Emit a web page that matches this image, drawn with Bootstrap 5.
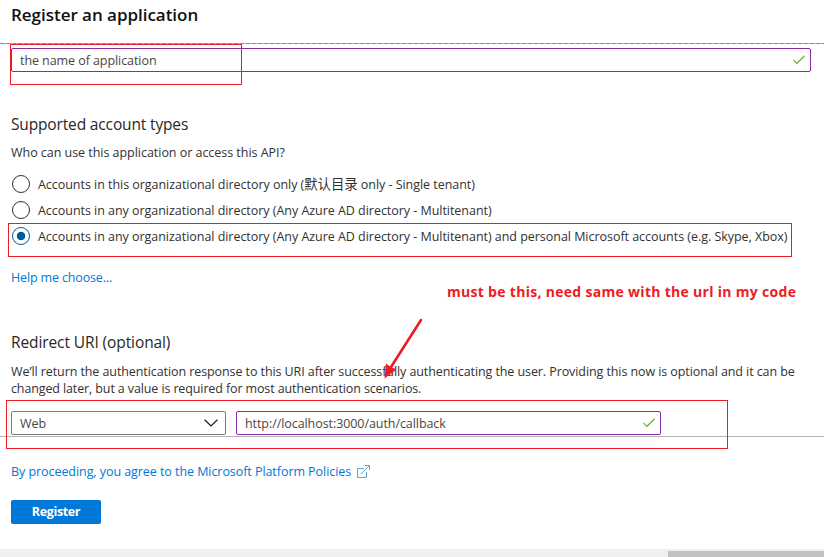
<!DOCTYPE html>
<html lang="en">
<head>
<meta charset="utf-8">
<meta name="viewport" content="width=device-width, initial-scale=1">
<title>Register an application</title>
<link href="https://cdn.jsdelivr.net/npm/bootstrap@5.3.0/dist/css/bootstrap.min.css" rel="stylesheet">
<style>
body{font-family:"Open Sans","Noto Sans CJK SC",sans-serif;font-size:12.5px;line-height:17px;letter-spacing:-.035px;color:#323130;background:#fff;height:557px;overflow:hidden}
.gutter-x{padding-left:11px;padding-right:13px}
.page-title{font-size:17px;line-height:30px;height:43px;font-weight:600;letter-spacing:-.03px;color:#111}
.dash-rule{height:1px;background:repeating-linear-gradient(90deg,#1fb5dc 0 4px,#b9b3b3 4px 6px)}
.section-title{font-size:15.5px;line-height:22px;letter-spacing:-.15px;color:#292827;font-weight:400;margin:0}
.az-field{height:24px;border-radius:2px;padding:0 5px 0 8px;background:#fff;border:1px solid #8a2da5;line-height:22px}
.az-field span{padding-top:1px;letter-spacing:-.07px;color:#484644}
.az-select{border-color:#7d7b79;width:215px;padding-right:7px}
.uri-field{width:425px}
.name-field{width:800px;margin-top:4px}
.types-block{margin-top:41px}
.types-question{margin-top:9px}
.radio-list{margin-top:10px;padding-left:1px}
.az-radio{height:26px;gap:8px}
.az-radio .form-check-input{width:18px;height:18px;margin:0;border:1px solid #323130;background-color:#fff;box-shadow:none}
.az-radio .form-check-input:checked{border-color:#005a9e;background-image:radial-gradient(circle,#005a9e 0 3.8px,transparent 4.6px);background-size:100% 100%}
.tenant{letter-spacing:-.04px}
.tenant-name{font-size:13.4px}
.az-link{color:#0078d4;text-decoration:none}
.help-link{margin-top:20px;letter-spacing:-.15px}
.redirect-block{margin-top:45px}
.redirect-title{letter-spacing:-.1px}
.redirect-text{margin-top:10px;letter-spacing:-.085px;line-height:17px;white-space:nowrap}
.redirect-text .line-two{letter-spacing:-.12px}
.uri-row{margin-top:14px;gap:10px}
.footer-rule{height:1px;margin-top:1px;background:#b3b3b3}
.policy{margin-top:26px;letter-spacing:-.06px;gap:6px}
.az-register{width:90px;height:24px;margin-top:20px;padding:0 0 1px;border-radius:2px;background:#0078d7;border:0;font-size:12.5px;line-height:22px;letter-spacing:-.35px;font-weight:700;color:#fff}
.az-register:hover{background:#0078d7;color:#fff}
.scroll-track{height:8px;background:#f0f0f0}
.scroll-thumb{width:156px;height:6px;background:#c1c1c1}
.red-box{position:absolute;border:1px solid #ed1c24}
.rb-name{left:10px;top:44px;width:232px;height:41px}
.rb-radio{left:8px;top:223px;width:784px;height:34px}
.rb-uri{left:6px;top:400px;width:722px;height:49px}
.red-note{position:absolute;left:447px;top:282px;font-size:14px;line-height:20px;letter-spacing:.3px;font-weight:700;color:#ed1c24;white-space:nowrap}
.red-arrow{position:absolute;left:376px;top:312px}
</style>
</head>
<body class="position-relative d-flex flex-column">
<h1 class="page-title gutter-x mb-0 flex-shrink-0">Register an application</h1>
<div class="dash-rule flex-shrink-0"></div>

<main class="gutter-x">
  <div class="az-field name-field d-flex align-items-center justify-content-between">
    <span>the name of application</span>
    <svg width="12" height="10" viewBox="0 0 12 10" fill="none" stroke="#6bb02c" stroke-width="1.2"><path d="M.4 4.8 3.9 8.3 11.6.8"/></svg>
  </div>

  <section class="types-block">
    <h2 class="section-title">Supported account types</h2>
    <div class="types-question">Who can use this application or access this API?</div>
    <div class="radio-list">
      <label class="az-radio d-flex align-items-center"><input class="form-check-input flex-shrink-0" type="radio" name="acct"><span class="tenant">Accounts in this organizational directory only (<span class="tenant-name">默认目录</span> only - Single tenant)</span></label>
      <label class="az-radio d-flex align-items-center"><input class="form-check-input flex-shrink-0" type="radio" name="acct"><span>Accounts in any organizational directory (Any Azure AD directory - Multitenant)</span></label>
      <label class="az-radio d-flex align-items-center text-nowrap"><input class="form-check-input flex-shrink-0" type="radio" name="acct" checked><span>Accounts in any organizational directory (Any Azure AD directory - Multitenant) and personal Microsoft accounts (e.g. Skype, Xbox)</span></label>
    </div>
    <a class="az-link help-link d-block" href="#">Help me choose...</a>
  </section>

  <section class="redirect-block">
    <h2 class="section-title redirect-title">Redirect URI (optional)</h2>
    <p class="redirect-text mb-0">We’ll return the authentication response to this URI after successfully authenticating the user. Providing this now is optional and it can be<br><span class="line-two">changed later, but a value is required for most authentication scenarios.</span></p>
    <div class="uri-row d-flex">
      <div class="az-field az-select d-flex align-items-center justify-content-between">
        <span>Web</span>
        <svg width="14" height="8" viewBox="0 0 14 8" fill="none" stroke="#1b1a19" stroke-width="1.2"><path d="M.6.7 7 7 13.4.7"/></svg>
      </div>
      <div class="az-field uri-field d-flex align-items-center justify-content-between">
        <span>http://localhost:3000/auth/callback</span>
        <svg width="12" height="10" viewBox="0 0 12 10" fill="none" stroke="#6bb02c" stroke-width="1.2"><path d="M.4 4.8 3.9 8.3 11.6.8"/></svg>
      </div>
    </div>
  </section>
</main>

<div class="footer-rule flex-shrink-0"></div>
<footer class="gutter-x">
  <a class="az-link policy d-flex align-items-center" href="#">By proceeding, you agree to the Microsoft Platform Policies
    <svg width="13" height="13" viewBox="0 0 13 13" fill="none" stroke="#5aa9cc" stroke-width="1"><path d="M7 3.500H.5v9h9V7M4 9 12 1M8 .5h4.500V5"/></svg>
  </a>
  <button class="btn az-register d-block" type="button">Register</button>
</footer>
<div class="scroll-track mt-auto d-flex justify-content-end align-items-end flex-shrink-0"><div class="scroll-thumb"></div></div>

<div class="red-box rb-name"></div>
<div class="red-box rb-radio"></div>
<div class="red-box rb-uri"></div>
<div class="red-note">must be this, need same with the url in my code</div>
<svg class="red-arrow" width="56" height="76" viewBox="376 312 56 76"><path d="M421 320 391 367" stroke="#ed1c24" stroke-width="2.600" stroke-linecap="round"/><path d="M384.500 378.500 386 363.500 390 366.500 396.500 369.500Z" fill="#ed1c24"/></svg>
<script src="https://cdn.jsdelivr.net/npm/bootstrap@5.3.0/dist/js/bootstrap.bundle.min.js"></script>
</body>
</html>
